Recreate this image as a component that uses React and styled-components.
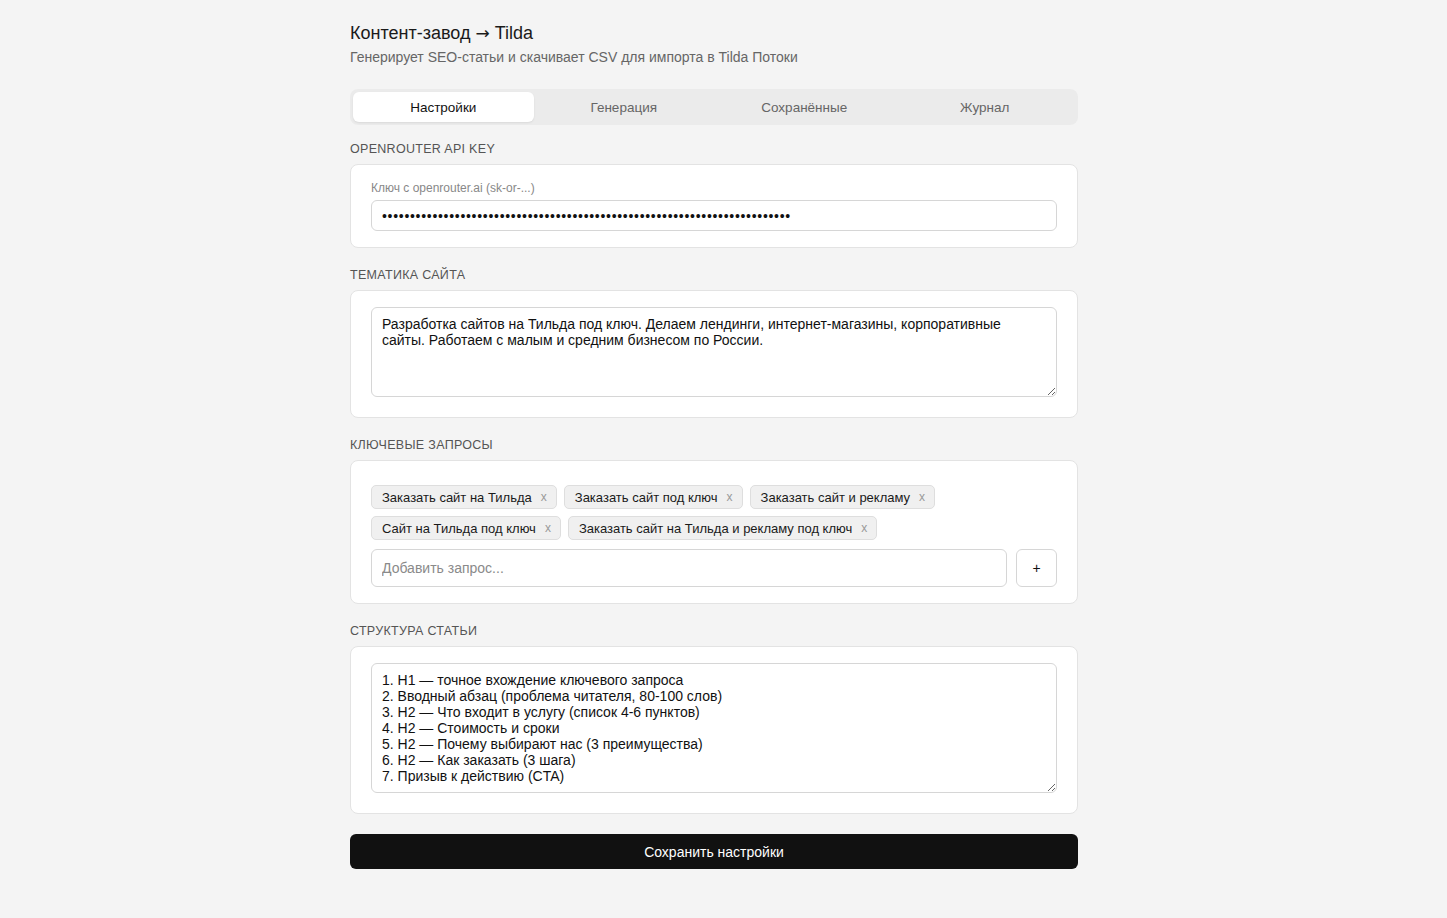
import React, { useState } from "react";
import styled, { createGlobalStyle } from "styled-components";

const GlobalStyle = createGlobalStyle`
  * { box-sizing: border-box; }
  body {
    margin: 0;
    background: #f4f4f4;
    font-family: "Liberation Sans", Arial, sans-serif;
    color: #1a1a1a;
  }
`;

const TABS = ["Настройки", "Генерация", "Сохранённые", "Журнал"];

const KEYWORDS = [
  "Заказать сайт на Тильда",
  "Заказать сайт под ключ",
  "Заказать сайт и рекламу",
  "Сайт на Тильда под ключ",
  "Заказать сайт на Тильда и рекламу под ключ",
];

const TOPIC =
  "Разработка сайтов на Тильда под ключ. Делаем лендинги, интернет-магазины, корпоративные сайты. Работаем с малым и средним бизнесом по России.";

const STRUCTURE = `1. H1 — точное вхождение ключевого запроса
2. Вводный абзац (проблема читателя, 80-100 слов)
3. H2 — Что входит в услугу (список 4-6 пунктов)
4. H2 — Стоимость и сроки
5. H2 — Почему выбирают нас (3 преимущества)
6. H2 — Как заказать (3 шага)
7. Призыв к действию (CTA)`;

const API_KEY = "sk-or-v1-" + "0123456789abcdef".repeat(4);

function App() {
  const [tab, setTab] = useState(0);
  const [keywords, setKeywords] = useState(KEYWORDS);

  return (
    <Page>
      <GlobalStyle />
      <Container>
        <Title>
          Контент-завод <Arrow>→</Arrow> Tilda
        </Title>
        <Subtitle>Генерирует SEO-статьи и скачивает CSV для импорта в Tilda Потоки</Subtitle>

        <Tabs>
          {TABS.map((t, i) => (
            <Tab key={t} $active={tab === i} onClick={() => setTab(i)}>
              {t}
            </Tab>
          ))}
        </Tabs>

        <Section>
          <SectionLabel>OpenRouter API Key</SectionLabel>
          <Card>
            <FieldLabel>Ключ с openrouter.ai (sk-or-...)</FieldLabel>
            <Input type="password" defaultValue={API_KEY} />
          </Card>
        </Section>

        <Section>
          <SectionLabel>Тематика сайта</SectionLabel>
          <Card>
            <TextArea $height={90} defaultValue={TOPIC} />
          </Card>
        </Section>

        <Section>
          <SectionLabel>Ключевые запросы</SectionLabel>
          <Card>
            <Tags>
              {keywords.map((k) => (
                <Tag key={k}>
                  {k}
                  <TagRemove onClick={() => setKeywords(keywords.filter((x) => x !== k))}>x</TagRemove>
                </Tag>
              ))}
            </Tags>
            <AddRow>
              <Input placeholder="Добавить запрос..." $height={38} />
              <AddButton>+</AddButton>
            </AddRow>
          </Card>
        </Section>

        <Section>
          <SectionLabel>Структура статьи</SectionLabel>
          <Card>
            <TextArea $height={130} defaultValue={STRUCTURE} />
          </Card>
        </Section>

        <SaveButton>Сохранить настройки</SaveButton>
      </Container>
    </Page>
  );
}

/* right padding keeps the column where it sits next to a classic scrollbar */
const Page = styled.div`
  padding: 22px 19px 60px 0;
`;

const Container = styled.div`
  width: 728px;
  margin: 0 auto;
`;

const Title = styled.h1`
  margin: 0;
  font-size: 18px;
  font-weight: 400;
  line-height: 22px;
  color: #1a1a1a;
`;

const Arrow = styled.span`
  font-family: "DejaVu Sans", sans-serif;
  font-size: 17px;
`;

const Subtitle = styled.p`
  margin: 4px 0 0;
  font-size: 14px;
  line-height: 18px;
  color: #666;
`;

const Tabs = styled.div`
  margin-top: 23px;
  display: grid;
  grid-template-columns: repeat(4, 1fr);
  padding: 3px;
  background: #ebebeb;
  border-radius: 8px;
`;

const Tab = styled.button`
  height: 30px;
  border: none;
  border-radius: 6px;
  font-family: inherit;
  font-size: 13.5px;
  cursor: pointer;
  background: ${(p) => (p.$active ? "#fff" : "transparent")};
  color: ${(p) => (p.$active ? "#111" : "#666")};
  box-shadow: ${(p) => (p.$active ? "0 1px 2px rgba(0,0,0,0.08)" : "none")};
`;

const Section = styled.section`
  margin-top: 19px;
  &:first-of-type {
    margin-top: 16px;
  }
`;

const SectionLabel = styled.div`
  font-size: 12.5px;
  line-height: 16px;
  letter-spacing: 0.3px;
  text-transform: uppercase;
  color: #555;
  margin-bottom: 7px;
`;

const Card = styled.div`
  background: #fff;
  border: 1px solid #e3e3e3;
  border-radius: 8px;
  padding: 16px 20px;
`;

const FieldLabel = styled.div`
  font-size: 12px;
  line-height: 14px;
  color: #888;
  margin-bottom: 5px;
`;

const Input = styled.input`
  display: block;
  width: 100%;
  height: ${(p) => p.$height || 31}px;
  padding: 0 10px;
  border: 1px solid #d6d6d6;
  border-radius: 6px;
  font-family: inherit;
  font-size: 14px;
  color: #111;
  background: #fff;
  outline: none;
  &[type="password"] {
    letter-spacing: 0.7px;
  }
  &::placeholder {
    color: #8a8a8a;
  }
`;

const TextArea = styled.textarea`
  display: block;
  width: 100%;
  height: ${(p) => p.$height}px;
  margin-bottom: 4px;
  padding: 8px 10px;
  border: 1px solid #d6d6d6;
  border-radius: 6px;
  font-family: inherit;
  font-size: 14px;
  line-height: 16px;
  color: #111;
  resize: vertical;
  outline: none;
`;

const Tags = styled.div`
  display: flex;
  flex-wrap: wrap;
  gap: 7px;
  padding-top: 8px;
  margin-bottom: 9px;
`;

const Tag = styled.span`
  display: inline-flex;
  align-items: center;
  gap: 9px;
  height: 24px;
  padding: 0 9px 0 10px;
  background: #f0f0f0;
  border: 1px solid #dedede;
  border-radius: 5px;
  font-size: 13px;
  color: #1a1a1a;
`;

const TagRemove = styled.span`
  font-size: 12px;
  color: #999;
  cursor: pointer;
`;

const AddRow = styled.div`
  display: flex;
  gap: 9px;
`;

const AddButton = styled.button`
  flex: 0 0 41px;
  height: 38px;
  border: 1px solid #d6d6d6;
  border-radius: 6px;
  background: #fff;
  font-family: inherit;
  font-size: 14px;
  color: #111;
  cursor: pointer;
`;

const SaveButton = styled.button`
  display: block;
  width: 100%;
  height: 35px;
  margin-top: 20px;
  border: none;
  border-radius: 6px;
  background: #111;
  color: #fff;
  font-family: inherit;
  font-size: 14px;
  cursor: pointer;
`;

export default App;
